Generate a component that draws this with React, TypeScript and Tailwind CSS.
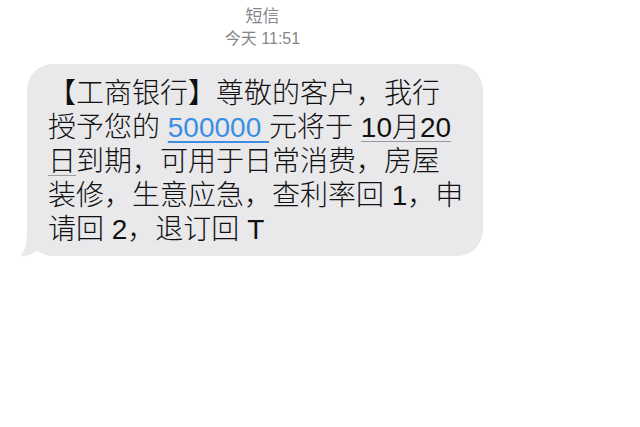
export default function App() {
  const font = { fontFamily: '"Liberation Sans", "Noto Sans CJK SC", sans-serif' };

  return (
    <main className="w-[640px] h-[427px] bg-white overflow-hidden" style={font}>
      {/* Header */}
      <div className="w-[525px] pt-[6px] text-center text-[#86868b] leading-[22px]">
        <div className="text-[17px]">短信</div>
        <div className="text-[16px]">今天 11:51</div>
      </div>

      {/* Message bubble */}
      <div className="relative ml-[27px] mt-[14px] w-[456px]">
        <div className="rounded-[26px] bg-[#e9e9eb] pl-[21px] pr-[10px] pt-[13px] pb-[9px] text-[28px] font-light leading-[34px] text-[#111]">
          【工商银行】尊敬的客户，我行
          <br />
          授予您的{' '}
          <span className="text-[#3b8ee0] underline decoration-[#3b8ee0] decoration-[1.5px] underline-offset-[4px]">500000 </span>
          元将于{' '}
          <span className="underline decoration-[#9a9aa0] decoration-1 underline-offset-[4px]">10月20</span>
          <br />
          <span className="underline decoration-[#9a9aa0] decoration-1 underline-offset-[4px]">日</span>
          到期，可用于日常消费，房屋
          <br />
          装修，生意应急，查利率回 1，申
          <br />
          请回 2，退订回 T
        </div>
        {/* tail */}
        <svg className="absolute left-[-8px] bottom-[-1px]" width="30" height="26" viewBox="0 0 30 26">
          <path d="M8 0 C 8 12, 6 20, 1 25.5 C 10 25, 16 22, 21 18 L 30 10 L 30 0 Z" fill="#e9e9eb" />
        </svg>
      </div>
    </main>
  );
}
